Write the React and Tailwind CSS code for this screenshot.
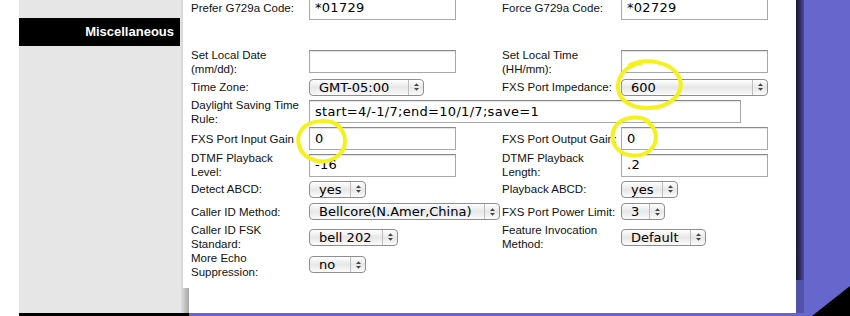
import React from 'react';

// Mac "aqua" style controls from an old SPA config page
function TextBox({ value, w }) {
  return (
    <div
      className={`${w} h-[23px] shrink-0 flex items-center bg-white border border-[#a8a8a8] border-t-[#8a8a8a] shadow-[inset_0_1px_1px_rgba(0,0,0,0.12)] pl-[5px] text-[13px] tracking-[0.3px] text-black font-['DejaVu_Sans',sans-serif] whitespace-nowrap overflow-hidden`}
    >
      {value}
    </div>
  );
}

function Popup({ value, w }) {
  return (
    <div
      className={`${w} h-[17px] shrink-0 flex items-stretch rounded-[4px] border border-[#8e8e8e] bg-linear-to-b from-[#ffffff] via-[#e7e7e7] to-[#fbfbfb] text-[13px] leading-[15px] text-black font-['DejaVu_Sans',sans-serif] whitespace-nowrap overflow-hidden`}
    >
      <div className="flex-1 pl-[9px] flex items-center">{value}</div>
      <div className="w-[15px] border-l border-[#bcbcbc] flex items-center justify-center">
        <svg width="7" height="10" viewBox="0 0 7 10">
          <polygon points="1,4 3.5,1.2 6,4" fill="#444" />
          <polygon points="1,6 3.5,8.8 6,6" fill="#444" />
        </svg>
      </div>
    </div>
  );
}

function Label({ lines, w }) {
  return (
    <div className={`${w} shrink-0 leading-[14px] whitespace-nowrap text-[11.5px] text-[#111]`}>
      {lines.map((l) => (
        <div key={l}>{l}</div>
      ))}
    </div>
  );
}

const rows = [
  {
    h: 'h-[24px]',
    l: ['Prefer G729a Code:'],
    lc: <TextBox value="*01729" w="w-[147px]" />,
    r: ['Force G729a Code:'],
    rc: <TextBox value="*02729" w="w-[147px]" />,
  },
  { h: 'h-[27px]' },
  {
    h: 'h-[29px]',
    l: ['Set Local Date', '(mm/dd):'],
    lc: <TextBox value="" w="w-[147px]" />,
    r: ['Set Local Time', '(HH/mm):'],
    rc: <TextBox value="" w="w-[147px]" />,
  },
  {
    h: 'h-[22px]',
    l: ['Time Zone:'],
    lc: <Popup value="GMT-05:00" w="w-[115px]" />,
    r: ['FXS Port Impedance:'],
    rc: <Popup value="600" w="w-[147px]" />,
  },
  {
    h: 'h-[27px]',
    l: ['Daylight Saving Time', 'Rule:'],
    wide: <TextBox value="start=4/-1/7;end=10/1/7;save=1" w="w-[432px]" />,
  },
  {
    h: 'h-[27px]',
    l: ['FXS Port Input Gain'],
    lc: <TextBox value="0" w="w-[147px]" />,
    r: ['FXS Port Output Gain:'],
    rc: <TextBox value="0" w="w-[147px]" />,
  },
  {
    h: 'h-[26px]',
    l: ['DTMF Playback', 'Level:'],
    lc: <TextBox value="-16" w="w-[147px]" />,
    r: ['DTMF Playback', 'Length:'],
    rc: <TextBox value=".2" w="w-[147px]" />,
  },
  {
    h: 'h-[22px]',
    l: ['Detect ABCD:'],
    lc: <Popup value="yes" w="w-[57px]" />,
    r: ['Playback ABCD:'],
    rc: <Popup value="yes" w="w-[57px]" />,
  },
  {
    h: 'h-[23px]',
    l: ['Caller ID Method:'],
    lc: <Popup value="Bellcore(N.Amer,China)" w="w-[191px]" />,
    r: ['FXS Port Power Limit:'],
    rc: <Popup value="3" w="w-[44px]" />,
  },
  {
    h: 'h-[28px]',
    l: ['Caller ID FSK', 'Standard:'],
    lc: <Popup value="bell 202" w="w-[89px]" />,
    r: ['Feature Invocation', 'Method:'],
    rc: <Popup value="Default" w="w-[85px]" />,
  },
  {
    h: 'h-[27px]',
    l: ['More Echo', 'Suppression:'],
    lc: <Popup value="no" w="w-[57px]" />,
  },
];

export default function App() {
  return (
    <div className="relative w-[850px] h-[316px] overflow-hidden bg-white flex flex-col font-['Liberation_Sans',Arial,sans-serif]">
      <div className="flex flex-1 min-h-0">
        <div className="w-[19px] bg-white" />

        {/* left nav */}
        <aside className="w-[162px] bg-[#e6e6e6] pt-[18px]">
          <div className="h-[28px] mr-[1px] bg-black text-white font-bold text-[13px] flex items-center justify-end pr-[6px]">
            Miscellaneous
          </div>
        </aside>

        {/* form panel */}
        <main className="w-[615px] flex flex-col">
          <div className="h-[288px] overflow-hidden bg-white border-l-2 border-[#d9d9d9] pl-[8px]">
            <div className="-mt-[4px]">
              {rows.map((row, i) => (
                <div key={i} className={`${row.h} flex items-center`}>
                  {row.l && <Label lines={row.l} w="w-[118px]" />}
                  {row.wide ? (
                    row.wide
                  ) : (
                    <>
                      <div className="w-[193px] shrink-0 flex items-center">{row.lc}</div>
                      {row.r && <Label lines={row.r} w="w-[119px]" />}
                      {row.rc}
                    </>
                  )}
                </div>
              ))}
            </div>
          </div>
          <div className="flex-1 flex">
            <div className="w-[8px] bg-linear-to-r from-[#dedede] to-[#a6a6a6]" />
            <div className="flex-1 bg-white" />
          </div>
        </main>

        {/* right purple margin */}
        <div className="flex-1 flex">
          <div className="w-[8px] flex flex-col">
            <div className="flex-1 bg-linear-to-r from-[#1a1a34] via-[#2d2d60] to-[#4d4da2]" />
            <div className="h-[33px] bg-[#5252aa]" />
          </div>
          <div className="flex-1 bg-[#6666cc]" />
        </div>
      </div>

      <div className="h-[3px] flex">
        <div className="w-[19px] bg-white" />
        <div className="w-[170px] bg-black" />
        <div className="flex-1 bg-[#6666cc]" />
      </div>

      <svg className="absolute right-0 bottom-0" width="38" height="30" viewBox="0 0 38 30">
        <polygon points="38,0 38,30 0,30" fill="#000" />
      </svg>

      {/* yellow hand-drawn highlights */}
      <svg className="absolute inset-0 pointer-events-none" width="850" height="316" viewBox="0 0 850 316">
        <g fill="none" stroke="#f4f11c" strokeWidth="4" strokeLinecap="round">
          <path d="M630 65 C646 58 671 61 679 77 C686 93 670 108 648 108 C628 108 617 98 618 85 C619 73 629 65 641 63" />
          <path d="M340 127 C332 119 312 119 303 128 C294 138 298 155 314 160 C330 165 345 155 345 141 C345 134 341 128 336 124" />
          <path d="M648 121 C638 115 621 117 615 127 C609 138 614 152 629 155 C644 158 656 149 656 137 C656 130 651 123 645 120" />
        </g>
      </svg>
    </div>
  );
}
